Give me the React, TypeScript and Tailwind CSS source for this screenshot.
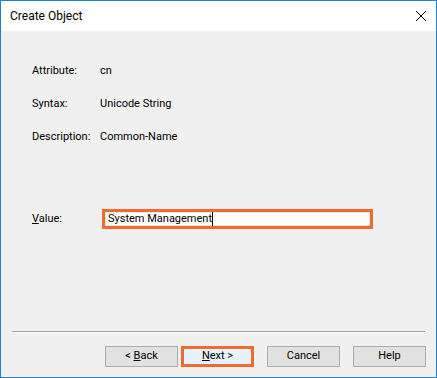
export default function App() {
  const rows = [
    { label: 'Attribute:', value: 'cn' },
    { label: 'Syntax:', value: 'Unicode String' },
    { label: 'Description:', value: 'Common-Name' },
  ];

  return (
    <div
      className="w-[437px] h-[378px] flex flex-col border border-[#1883d7] bg-[#f0f0f0] text-[11px] text-black"
      style={{ fontFamily: 'Roboto, "Noto Sans", sans-serif' }}
    >
      {/* title bar */}
      <div className="h-[30px] bg-white flex items-center justify-between pl-[9px] pr-[8px]">
        <span className="text-[12px]">Create Object</span>
        <svg width="12" height="12" viewBox="0 0 12 12" className="mr-[1px]">
          <path d="M1 1 L11 11 M11 1 L1 11" stroke="#000" strokeWidth="1" />
        </svg>
      </div>

      <div className="flex-1 flex flex-col">
        <div className="pl-[31px] pt-[32px] flex flex-col gap-[16px]">
          {rows.map((r) => (
            <div key={r.label} className="flex h-[17px] items-center">
              <span className="w-[68px]">{r.label}</span>
              <span>{r.value}</span>
            </div>
          ))}
        </div>

        <div className="flex items-center pl-[31px] mt-[63px]">
          <span className="w-[70px]">
            <span className="underline">V</span>alue:
          </span>
          <div className="w-[271px] h-[20px] border-[3px] border-[#f26a2c] bg-white flex items-center">
            <div className="w-full h-full border border-[#e6e6e6] flex items-center pl-[2px]">
              System Management
              <span className="inline-block w-px h-[14px] bg-black" />
            </div>
          </div>
        </div>

        <div className="flex-1" />

        <div className="mx-[11px] h-px bg-[#a0a0a0] border-b border-white box-content" />

        <div className="flex justify-end gap-[13px] pr-[10px] pt-[13px] pb-[10px]">
          <button className="w-[73px] h-[21px] bg-[#e1e1e1] border border-[#adadad] flex items-center justify-center">
            &lt;&nbsp;<span className="underline">B</span>ack
          </button>
          <button className="w-[73px] h-[21px] bg-[#e5f1fb] border-[3px] border-[#f26a2c] flex items-center justify-center -ml-[10px]">
            <span className="underline">N</span>ext &gt;
          </button>
          <button className="w-[73px] h-[21px] bg-[#e1e1e1] border border-[#adadad] flex items-center justify-center">
            Cancel
          </button>
          <button className="w-[73px] h-[21px] bg-[#e1e1e1] border border-[#adadad] flex items-center justify-center">
            Help
          </button>
        </div>
      </div>
    </div>
  );
}
